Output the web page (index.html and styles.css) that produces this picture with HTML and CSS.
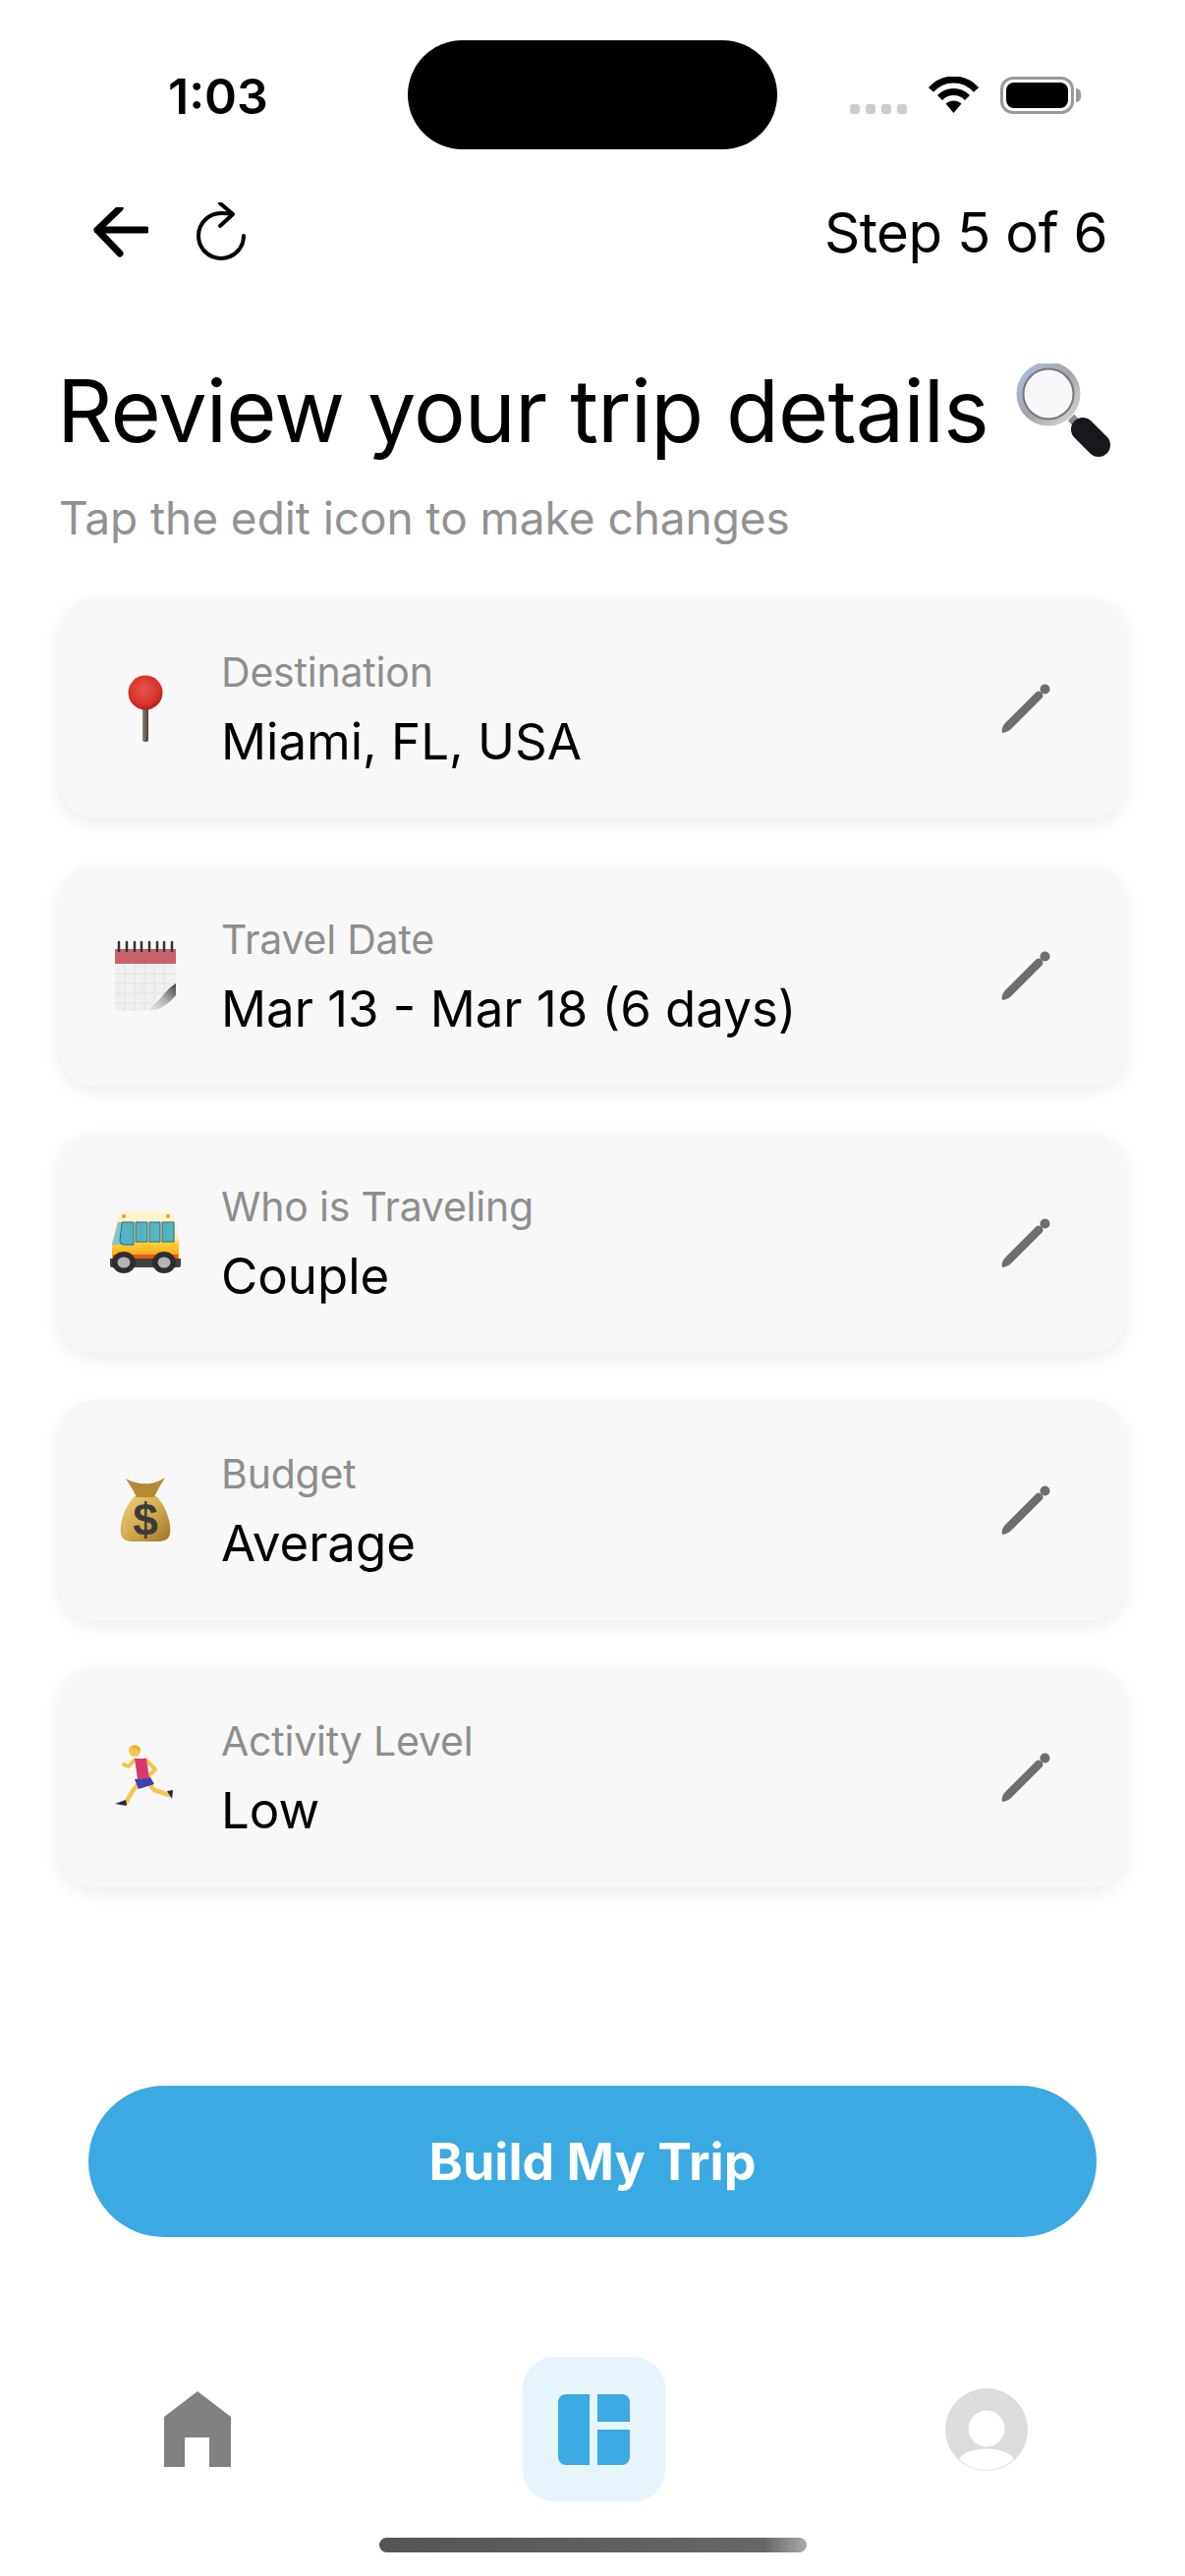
FILE: index.html
```html
<!DOCTYPE html>
<html lang="en">
<head>
<meta charset="utf-8">
<title>Review your trip details</title>
<link rel="stylesheet" href="styles.css">
</head>
<body>
<div class="page">
  <div class="status">
    <div class="time">1:03</div>
    <div class="island"></div>
    <div class="status-icons">
      <div class="dots"><i></i><i></i><i></i><i></i></div>
      <svg class="wifi" width="51" height="37" viewBox="0 0 51 37"><path d="M2.5 13.5C15-.5 36-.5 48.500 13.500" fill="none" stroke="#000" stroke-width="7"/><path d="M11.500 21.500C19 13.500 32 13.500 39.500 21.500" fill="none" stroke="#000" stroke-width="7"/><path d="M17.500 27.500C22.500 23.500 28.500 23.500 33.500 27.500L25.500 37Z" fill="#000"/></svg>
      <div class="battery"><div class="battery-fill"></div></div>
      <div class="battery-tip"></div>
    </div>
  </div>

  <div class="topbar">
    <div class="nav-icons">
      <svg width="56" height="52" viewBox="0 0 56 52"><path d="M4 23H54M27 1 4 23 27 47" fill="none" stroke="#000" stroke-width="7" stroke-linecap="round" stroke-linejoin="round"/></svg>
      <svg width="54" height="62" viewBox="0 0 54 62"><path d="M37 12C33 11 29 11 26 11A23 23 0 1 0 49 34" fill="none" stroke="#000" stroke-width="4" stroke-linecap="round"/><path d="M25 1 38 12 25 24" fill="none" stroke="#000" stroke-width="4" stroke-linecap="round" stroke-linejoin="round"/></svg>
    </div>
    <div class="step">Step 5 of 6</div>
  </div>

  <div class="heading">
    <h1 class="title">Review your trip details
      <svg class="magnifier" width="98" height="96" viewBox="0 0 98 96">
        <defs><linearGradient id="ring" x1="0" y1="0" x2="1" y2="1"><stop offset="0" stop-color="#a9c0e0"/><stop offset=".5" stop-color="#a4a4a8"/><stop offset="1" stop-color="#d8d8d8"/></linearGradient></defs>
        <path d="M57 55 66 64" stroke="#8a8a8a" stroke-width="9"/>
        <path d="M69 67 85 83" stroke="#17181c" stroke-width="24" stroke-linecap="round"/>
        <circle cx="34" cy="31" r="29" fill="#f8f8fb" stroke="url(#ring)" stroke-width="7"/>
        <circle cx="34" cy="31" r="25.500" fill="none" stroke="#77777c" stroke-width="2"/>
      </svg>
    </h1>
    <p class="subtitle">Tap the edit icon to make changes</p>
  </div>

  <div class="cards">
    <div class="card">
      <svg class="emoji" width="80" height="80" viewBox="0 0 80 80">
        <defs><radialGradient id="pin" cx=".45" cy=".4" r=".65"><stop offset="0" stop-color="#e8554e"/><stop offset=".7" stop-color="#d63128"/><stop offset="1" stop-color="#a81d18"/></radialGradient><linearGradient id="stick" x1="0" x2="1"><stop offset="0" stop-color="#8f8378"/><stop offset="1" stop-color="#4a443e"/></linearGradient></defs>
        <rect x="38" y="36" width="6" height="38" rx="2" fill="url(#stick)"/>
        <circle cx="41" cy="24" r="17.500" fill="url(#pin)"/>
      </svg>
      <div class="info"><div class="label">Destination</div><div class="value">Miami, FL, USA</div></div>
      <svg class="edit" width="52" height="52" viewBox="0 0 52 52"><path d="M1 46Q2 43 4 41L36 9Q38 8 40 9L42 11Q43 13 42 15L10 47Q8 49 5 50L2 51Q0 51 1 46Z" fill="#6e6e6e"/><circle cx="44.500" cy="6.500" r="5" fill="#6e6e6e"/></svg>
    </div>

    <div class="card">
      <svg class="emoji" width="80" height="80" viewBox="0 0 80 80">
        <defs><linearGradient id="curl" x1="0" y1="1" x2="1" y2="0"><stop offset="0" stop-color="#f6f6f6"/><stop offset=".5" stop-color="#b5b5b5"/><stop offset="1" stop-color="#3f3f3f"/></linearGradient></defs>
        <path d="M10 13H72V48L40 76H10Z" fill="#efefef"/>
        <path d="M20 28V76M30 28V76M40 28V75M50 28V67M60 28V58M10 38H72M10 48H72M10 58H60M10 68H48" stroke="#e0e0e0" stroke-width="1"/>
        <rect x="10" y="13" width="62" height="15" fill="#c9626a"/>
        <path d="M14 6V15M22 6V15M30 6V15M37 6V15M45 6V15M53 6V15M60 6V15M68 6V15" stroke="#333" stroke-width="2.500" stroke-linecap="round"/>
        <path d="M72 48C60 55 54 70 40 75 52 77 62 72 72 60Z" fill="url(#curl)"/>
      </svg>
      <div class="info"><div class="label">Travel Date</div><div class="value">Mar 13 - Mar 18 (6 days)</div></div>
      <svg class="edit" width="52" height="52" viewBox="0 0 52 52"><path d="M1 46Q2 43 4 41L36 9Q38 8 40 9L42 11Q43 13 42 15L10 47Q8 49 5 50L2 51Q0 51 1 46Z" fill="#6e6e6e"/><circle cx="44.500" cy="6.500" r="5" fill="#6e6e6e"/></svg>
    </div>

    <div class="card">
      <svg class="emoji" width="80" height="80" viewBox="0 0 80 80">
        <defs><linearGradient id="busbody" x1="0" y1="0" x2="0" y2="1"><stop offset="0" stop-color="#fff6d4"/><stop offset=".55" stop-color="#fbeab0"/><stop offset=".62" stop-color="#ffcf3a"/><stop offset=".82" stop-color="#ffb01e"/><stop offset="1" stop-color="#f0620f"/></linearGradient></defs>
        <path d="M12 17Q13 8 23 8H60Q70 8 71 17L75 38V60H7V38Z" fill="url(#busbody)"/>
        <path d="M13 19H16L15 42H7Z" fill="#7cc6cf"/>
        <path d="M17 19H29V42H19Q15 42 15 38Z" fill="#55b4c2" stroke="#2f6a75" stroke-width="1"/>
        <path d="M31 19H43V39H31ZM45 19H56V39H45ZM58 19H70V39H58Z" fill="#55b4c2" stroke="#2f6a75" stroke-width="1"/>
        <circle cx="19" cy="13" r="2" fill="#f39a1e"/><circle cx="64" cy="13" r="2" fill="#f39a1e"/>
        <path d="M5 56H77V63Q77 65 75 65H7Q5 65 5 63Z" fill="#3f3f3f"/>
        <path d="M8 52H74V56H8Z" fill="#e8590f"/>
        <ellipse cx="19" cy="60" rx="12" ry="11" fill="#2e2e30"/><ellipse cx="19" cy="60" rx="6.500" ry="5.500" fill="#b4b4b4"/>
        <ellipse cx="60" cy="60" rx="12" ry="11" fill="#2e2e30"/><ellipse cx="60" cy="60" rx="6.500" ry="5.500" fill="#b4b4b4"/>
      </svg>
      <div class="info"><div class="label">Who is Traveling</div><div class="value">Couple</div></div>
      <svg class="edit" width="52" height="52" viewBox="0 0 52 52"><path d="M1 46Q2 43 4 41L36 9Q38 8 40 9L42 11Q43 13 42 15L10 47Q8 49 5 50L2 51Q0 51 1 46Z" fill="#6e6e6e"/><circle cx="44.500" cy="6.500" r="5" fill="#6e6e6e"/></svg>
    </div>

    <div class="card">
      <svg class="emoji" width="80" height="80" viewBox="0 0 80 80">
        <defs><linearGradient id="bag" x1="0" y1="0" x2="1" y2="1"><stop offset="0" stop-color="#ecd27a"/><stop offset=".55" stop-color="#cfa64a"/><stop offset="1" stop-color="#9c7425"/></linearGradient></defs>
        <path d="M30 26C22 33 14 52 16 64 17 70 22 72 28 72H54C60 72 65 70 66 64 68 52 60 33 52 26Z" fill="url(#bag)"/>
        <path d="M21 8Q32 14 41 13 50 14 61 7 54 18 50 27H32Q28 18 21 8Z" fill="#b48b33"/>
        <text class="dollar" x="41" y="66" text-anchor="middle">$</text>
      </svg>
      <div class="info"><div class="label">Budget</div><div class="value">Average</div></div>
      <svg class="edit" width="52" height="52" viewBox="0 0 52 52"><path d="M1 46Q2 43 4 41L36 9Q38 8 40 9L42 11Q43 13 42 15L10 47Q8 49 5 50L2 51Q0 51 1 46Z" fill="#6e6e6e"/><circle cx="44.500" cy="6.500" r="5" fill="#6e6e6e"/></svg>
    </div>

    <div class="card">
      <svg class="emoji" width="80" height="80" viewBox="0 0 80 80">
        <path d="M36 44 28 54 21 66" fill="none" stroke="#f5c64b" stroke-width="4.500" stroke-linecap="round" stroke-linejoin="round"/>
        <path d="M44 46 50 53 65 58" fill="none" stroke="#f5c64b" stroke-width="4.500" stroke-linecap="round" stroke-linejoin="round"/>
        <path d="M10 67 21 63 22 69Z M63 54 69 53 68 62Z" fill="#1f2a44"/>
        <path d="M30 22 24 29 19 27" fill="none" stroke="#f5c64b" stroke-width="4" stroke-linecap="round" stroke-linejoin="round"/>
        <path d="M41 22 51 32 44 39" fill="none" stroke="#f5c64b" stroke-width="4" stroke-linecap="round" stroke-linejoin="round"/>
        <path d="M30 42 46 40 50 47 34 52Z" fill="#3e3fb0"/>
        <path d="M30 21 42 21 45 41 33 42Z" fill="#d8386c"/>
        <circle cx="30" cy="13" r="6" fill="#f5c64b"/>
        <path d="M25 10Q30 5 36 10L35 14 31 11Z" fill="#f0b429"/>
      </svg>
      <div class="info"><div class="label">Activity Level</div><div class="value">Low</div></div>
      <svg class="edit" width="52" height="52" viewBox="0 0 52 52"><path d="M1 46Q2 43 4 41L36 9Q38 8 40 9L42 11Q43 13 42 15L10 47Q8 49 5 50L2 51Q0 51 1 46Z" fill="#6e6e6e"/><circle cx="44.500" cy="6.500" r="5" fill="#6e6e6e"/></svg>
    </div>
  </div>

  <div class="cta"><button class="build">Build My Trip</button></div>

  <div class="tabbar">
    <svg class="tab-home" width="68" height="77" viewBox="0 0 68 77"><path d="M34 0 68 26V77H46V47H21V77H0V26Z" fill="#808080"/></svg>
    <div class="tab-active">
      <div class="grid-icon"><div class="grid-left"></div><div class="grid-right"><i class="grid-top"></i><i class="grid-bottom"></i></div></div>
    </div>
    <svg class="tab-user" width="84" height="84" viewBox="0 0 84 84"><circle cx="42" cy="42" r="42" fill="#dcdcdc"/><circle cx="42" cy="41" r="18.500" fill="#fff"/><path d="M14 72C22 58 62 58 70 72 60 81 50 83 42 83 34 83 24 81 14 72Z" fill="#fff"/></svg>
  </div>
  <div class="home-bar"></div>
</div>
</body>
</html>
```
FILE: styles.css
```css
* { box-sizing: border-box; }
html, body { margin: 0; padding: 0; background: #fff; }
body { font-family: Inter, "Liberation Sans", sans-serif; color: #000; }
.page { width: 1206px; height: 2622px; display: flex; flex-direction: column; overflow: hidden; }

.status { height: 198px; padding: 41px 106px 0 171px; display: flex; align-items: flex-start; }
.time { width: 101px; margin-top: 29px; font-size: 50px; line-height: 56px; font-weight: 600; letter-spacing: 0; white-space: nowrap; }
.island { width: 376px; height: 111px; margin-left: 143px; border-radius: 56px; background: #000; }
.status-icons { margin-left: 74px; margin-top: 37px; height: 40px; display: flex; align-items: flex-start; }
.dots { display: flex; gap: 6px; margin-top: 28px; }
.dots i { width: 10px; height: 10px; border-radius: 3px; background: #ccc; }
.wifi { margin-left: 22px; }
.battery { width: 75px; height: 38px; margin-left: 22px; padding: 3px; border: 3px solid #999; border-radius: 13px; background: #fff; }
.battery-fill { width: 100%; height: 100%; background: #000; border-radius: 8px; }
.battery-tip { width: 5px; height: 14px; margin-top: 12px; margin-left: 2px; background: #999; border-radius: 0 5px 5px 0; }

.topbar { height: 78px; padding: 0 79px 0 95px; display: flex; justify-content: space-between; align-items: center; }
.nav-icons { display: flex; align-items: center; gap: 48px; }
.step { font-size: 56.500px; line-height: 66px; letter-spacing: -.5px; }

.heading { padding: 0 60px 0 58px; margin-top: 92px; }
.title { margin: 0; font-size: 88px; line-height: 100px; font-weight: 400; letter-spacing: -.87px; white-space: nowrap; display: flex; align-items: center; gap: 27px; }
.subtitle { margin: 31px 0 0 2px; font-size: 46px; line-height: 56px; letter-spacing: -.05px; color: #929292; }

.cards { margin-top: 54px; padding: 0 60px; display: flex; flex-direction: column; gap: 48px; }
.card { height: 224px; padding: 0 75px 0 47px; display: flex; align-items: center; background: #f8f8f8; border-radius: 36px; box-shadow: 0 6px 18px rgba(0, 0, 0, .07); }
.emoji { flex: none; }
.info { flex: 1; margin-left: 38px; padding-top: 2px; }
.label { font-size: 41px; line-height: 50px; letter-spacing: -.2px; color: #8e8e8e; }
.value { margin-top: 15px; font-size: 51px; line-height: 62px; }
.edit { flex: none; }
.dollar { font: 700 46px "Liberation Sans", sans-serif; fill: #3a3a3a; }

.cta { margin-top: 202px; padding: 0 90px; }
.build { width: 100%; height: 154px; border: 0; border-radius: 77px; background: #3ba9e2; color: #fff; font: 700 52px Inter, "Liberation Sans", sans-serif; }

.tabbar { margin-top: 122px; padding: 0 160px 0 167px; height: 147px; display: flex; justify-content: space-between; align-items: center; }
.tab-active { width: 145px; height: 147px; margin-left: 12px; display: flex; align-items: center; justify-content: center; background: #e6f4fb; border-radius: 32px; }
.grid-icon { width: 73px; height: 72px; display: flex; gap: 8px; }
.grid-left { width: 32px; background: #3ba9e2; border-radius: 8px 0 0 8px; }
.grid-right { flex: 1; display: flex; flex-direction: column; gap: 8px; }
.grid-top { height: 28px; background: #3ba9e2; border-radius: 0 8px 0 0; }
.grid-bottom { flex: 1; background: #3ba9e2; border-radius: 0 0 8px 0; }

.home-bar { width: 435px; height: 15px; margin: 37px auto 0; border-radius: 8px; background: linear-gradient(90deg, #555 0%, #666 90%, #aaa 100%); }
```
